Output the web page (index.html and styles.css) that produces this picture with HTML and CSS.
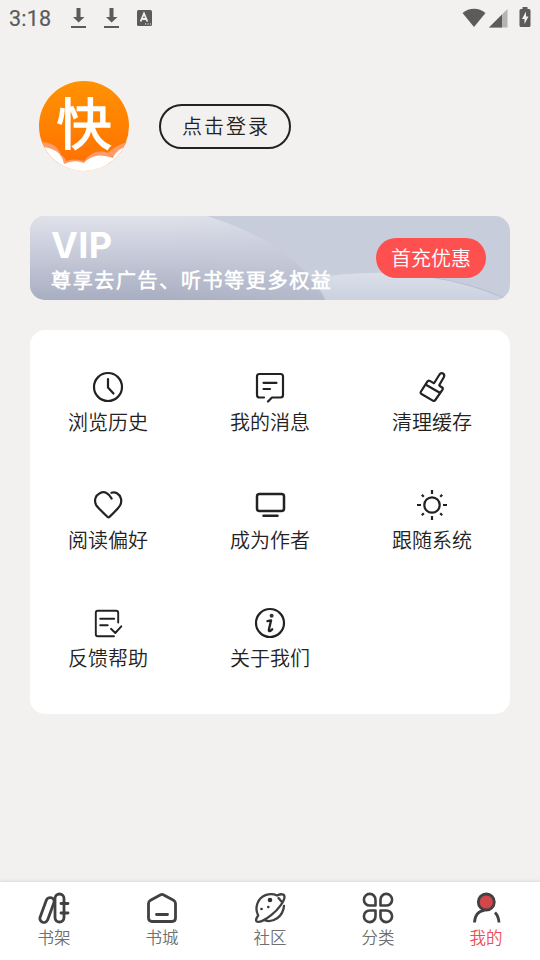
FILE: index.html
```
<!DOCTYPE html>
<html lang="zh-CN">
<head>
<meta charset="utf-8">
<title>我的</title>
<link rel="stylesheet" href="styles.css">
</head>
<body>
<header class="status">
  <span class="time">3:18</span>
  <svg class="dl" width="16" height="22" viewBox="0 0 16 22"><path d="M5.500 1h4v9h4L7.600 15.500 2 10h3.500zM0 19h15v2H0z"/></svg>
  <svg class="dl second" width="16" height="22" viewBox="0 0 16 22"><path d="M5.500 1h4v9h4L7.600 15.500 2 10h3.500zM0 19h15v2H0z"/></svg>
  <svg class="lang" width="15" height="16" viewBox="0 0 15 16"><rect width="15" height="16" rx="1.500"/><path class="letter" d="M3.600 11.500 7 3.500l3.400 8M5 9h4"/><path class="dots" d="M8 14h1.200M10.500 14h1.200M13 14h1"/></svg>
  <span class="spacer"></span>
  <svg class="wifi" width="24" height="20" viewBox="0 0 24 20"><path d="M.5 5C7-.8 17-.8 23.500 5L12 19z"/></svg>
  <svg class="signal" width="19" height="19" viewBox="0 0 19 19"><path d="M0 18.500 18.500 0v18.500z" opacity=".4"/><path d="M0 18.500 13 5.500v13z"/></svg>
  <svg class="battery" width="12" height="20" viewBox="0 0 12 20"><path d="M3.500 0h5v2H10q1.500 0 1.500 1.500v15q0 1.500-1.500 1.500H2Q.5 20 .5 18.500v-15Q.5 2 2 2h1.500z"/><path class="bolt" d="M7 4.500 3 12h2.500v5L9.500 9.500H7z"/></svg>
</header>
<section class="profile">
  <div class="avatar">
    <svg class="clouds" width="90" height="90" viewBox="0 0 90 90">
      <path fill="#ff9b66" d="M0 61Q18 61 22 74q4 2 5 6 8-3 18 0Q55 67 69 72q7-8 21-11v29H0z"/>
      <path fill="#fff" d="M0 66Q22 66 25 83q10-5 20-1 10-12 29-5Q78 67 90 65v25H0z"/>
    </svg>
    <span>快</span>
  </div>
  <button class="login">点击登录</button>
</section>
<section class="vip">
  <svg class="vip-art" width="480" height="84" viewBox="0 0 480 84">
    <defs>
      <linearGradient id="a" x1="0" y1="0" x2="0" y2="1"><stop stop-color="#e0e2eb"/><stop offset="1" stop-color="#a8aec2"/></linearGradient>
      <linearGradient id="b" x1="0" y1="0" x2="0" y2="1"><stop stop-color="#dadfea"/><stop offset="1" stop-color="#cbd1df"/></linearGradient>
      <linearGradient id="c" x1="0" y1="0" x2="1" y2="0"><stop stop-color="#e0e2eb" stop-opacity="0"/><stop offset=".45" stop-color="#c8ccda" stop-opacity="0"/><stop offset="1" stop-color="#c8ccda" stop-opacity=".4"/></linearGradient>
    </defs>
    <path fill="url(#a)" d="M0 0h177Q268 29 295 84H0z"/>
    <path fill="url(#c)" d="M0 0h177Q268 29 295 84H0z"/>
    <path fill="url(#b)" d="M280 63Q330 54 378 58q52 4 97 26H296q-5-12-16-21z"/>
    <path fill="none" stroke="#b5bdd0" d="M400 61q40 6 75 21"/>
  </svg>
  <div class="vip-copy"><h1>VIP</h1><p>尊享去广告、听书等更多权益</p></div>
  <button class="offer">首充优惠</button>
</section>
<main class="menu">
  <a class="item"><svg viewBox="0 0 32 32"><circle cx="16" cy="16" r="14"/><path d="M16 8v8.500l5.500 6"/></svg>浏览历史</a>
  <a class="item"><svg viewBox="0 0 32 32"><path d="M10 26.500H5.500q-2.500 0-2.500-2.500V5.500Q3 3 5.500 3h21Q29 3 29 5.500V24q0 2.500-2.500 2.500H18l-4 4M9.500 11.800h13M9.500 18h6.500"/></svg>我的消息</a>
  <a class="item"><svg viewBox="0 0 32 32"><path d="M11.300 10.600q1-1.500 2.500-.7l3.500 2q.8.400 1.200-.4L23.200 4c1-2 2.500-2.300 3.800-1.500s1.600 2.100.8 3.700l-4.300 7.500q-.5.800.3 1.300l2 1.200q1.600 1 .6 2.600L19.300 29q-1 1.500-2.500.6L5.500 23q-1.500-1-.5-2.500zM9.500 13.500l14.700 8.500"/></svg>清理缓存</a>
  <a class="item"><svg viewBox="0 0 32 32"><path d="M19.600 9.500C17 4.200 12.500 1.700 7.800 4.200 3.200 6.500 2 11.500 4 15.800 6 19 12.500 25 15.500 27.900q1 .8 2 0C20 25.500 26.500 19 28 16.500 30.500 12 29 6.500 25 4.200q-2.700-1.400-5.500-.4"/></svg>阅读偏好</a>
  <a class="item"><svg viewBox="0 0 32 32"><rect x="3" y="5" width="27" height="17" rx="2.500" stroke-width="2.500"/><path stroke-width="2.500" d="M9.500 26.800h14"/></svg>成为作者</a>
  <a class="item"><svg viewBox="0 0 32 32"><circle cx="16" cy="16" r="7.700"/><path stroke-linecap="butt" d="M16 1v4M16 27v4M1 16h4M27 16h4M5.800 5.800l2 2M24.200 24.200l2 2M5.800 26.200l2-2M24.200 7.800l2-2"/></svg>跟随系统</a>
  <a class="item"><svg viewBox="0 0 32 32"><path d="M26.200 15.500V5.700q0-2-2-2H5.800q-2 0-2 2v21.500q0 2 2 2H22M8.200 11.800h14M8.200 18.300h7.500M19 21.800l4.300 4.200 6-6.700" stroke-width="1.900"/></svg>反馈帮助</a>
  <a class="item"><svg viewBox="0 0 32 32"><circle cx="16" cy="16" r="14"/><circle class="solid" cx="17.600" cy="8.800" r="2"/><path d="M13.500 14.200l3.600-.9-2.200 9.200q-.4 2.200 1.300 1.500l2-1.700" stroke-width="2.300"/></svg>关于我们</a>
</main>
<nav class="tabs">
  <a class="tab"><svg viewBox="0 0 32 32"><rect x="5" y="5" width="8" height="26" rx="4" transform="rotate(20 9 18)"/><rect x="17" y="2" width="9" height="28" rx="4.500"/><path d="M23 11.500h7M23 21h7"/></svg>书架</a>
  <a class="tab"><svg viewBox="0 0 32 32"><path d="M2.500 11.500q0-2.200 2-3.300L14.700 2.700q1.300-.7 2.600 0L27.500 8.200q2 1.100 2 3.300V26q0 3.500-3.500 3.500H6Q2.500 29.500 2.500 26zM10.500 22.500h11"/></svg>书城</a>
  <a class="tab"><svg viewBox="0 0 32 32"><path stroke-width="2.300" d="M4.200 23.500C0 15.500 4 6 11.500 3.200q6-2.300 11.500.3M11 28.400c8 2.500 18-3.300 19-14.500M23 3.500c4-1.800 7.500-1.800 7.500 1.200 0 4.500-6 12.500-13 18.200C11 28.300 4.500 31.300 2.500 29.300 1.500 28 2.700 25.500 4.200 23.500M24.500 6l3 3.500"/><circle class="solid" cx="16" cy="8" r="2.300"/><circle class="solid" cx="7.500" cy="17" r="1.300"/><circle class="solid" cx="14.300" cy="15" r="1.300"/></svg>社区</a>
  <a class="tab"><svg viewBox="0 0 32 32"><path stroke-width="2.600" d="M13.500 13.500H8A5.800 5.800 0 1 1 13.500 8zM18.500 13.500H24A5.800 5.800 0 1 0 18.500 8zM13.500 18.500H8A5.800 5.800 0 1 0 13.500 24zM18.500 18.500H24A5.800 5.800 0 1 1 18.500 24z"/></svg>分类</a>
  <a class="tab active"><svg viewBox="0 0 32 32"><circle class="head" cx="16.300" cy="10" r="8"/><path d="M4.500 30.500Q5 19.500 14.500 18.300M25 20.500q3.500 3.500 4 10" stroke-linecap="butt"/></svg>我的</a>
</nav>
</body>
</html>
```
FILE: styles.css
```
* { box-sizing: border-box; }
body {
  margin: 0;
  width: 540px;
  height: 960px;
  display: flex;
  flex-direction: column;
  background: #f2f1ef;
  color: #222;
  font-family: "Noto Sans CJK SC DemiLight", "Noto Sans CJK SC", sans-serif;
  font-weight: 350;
  overflow: hidden;
}
button { border: 0; padding: 0; font: inherit; }
svg { display: block; flex: none; }
.status {
  height: 36px;
  padding: 0 9px;
  display: flex;
  align-items: center;
  fill: #5b5b5b;
}
.time { width: 62px; font: 400 21.500px/36px Roboto, sans-serif; letter-spacing: .2px; color: #5b5b5b; -webkit-text-stroke: .2px #5b5b5b; padding-top: 2px; }
.second { margin-left: 17px; }
.lang { margin-left: 17px; }
.letter, .dots { fill: none; stroke: #f2f1ef; stroke-width: 1.800; }
.dots { stroke-width: 1.200; }
.spacer { flex: 1; }
.signal { margin-left: 3px; }
.battery { margin-left: 11px; margin-top: -2px; }
.bolt { fill: #f2f1ef; }
.profile {
  height: 180px;
  padding-left: 39px;
  display: flex;
  align-items: center;
  gap: 30px;
}
.avatar {
  position: relative;
  width: 90px;
  height: 90px;
  border-radius: 50%;
  overflow: hidden;
  background: linear-gradient(#ff9200, #ff7200 92%, #fff 93%);
  color: #fff;
  text-align: center;
  font-size: 55px;
  font-weight: 700;
  line-height: 78px;
}
.avatar span { position: relative; }
.clouds { position: absolute; inset: 0; }
.login {
  width: 132px;
  height: 45px;
  border: 2px solid #222;
  border-radius: 23px;
  background: none;
  color: #222;
  font-size: 20px;
  letter-spacing: 2px;
  padding-left: 2px;
  line-height: 40px;
}
.vip {
  position: relative;
  height: 84px;
  flex: none;
  margin: 0 30px;
  padding: 0 24px 0 21px;
  display: flex;
  align-items: center;
  justify-content: space-between;
  border-radius: 15px;
  overflow: hidden;
  background: #c8cddb;
  color: #fff;
}
.vip-art { position: absolute; inset: 0; }
.vip-copy, .offer { position: relative; }
.vip h1 { margin: 0; font: 700 36px/34px Inter, sans-serif; letter-spacing: .4px; }
.vip p { margin: 3px 0 0; font-size: 20px; font-weight: 700; line-height: 30px; letter-spacing: 1.650px; }
.vip-copy { padding-top: 7px; }
.offer {
  width: 110px;
  height: 40px;
  border-radius: 20px;
  background: #ff5050;
  color: #fff;
  font-size: 20px;
  line-height: 40px;
}
.menu {
  flex: none;
  height: 384px;
  margin: 30px 30px 0;
  padding: 41px 38px 0;
  display: grid;
  grid-template-columns: repeat(3, 80px);
  column-gap: 82px;
  grid-auto-rows: 118px;
  align-content: start;
  border-radius: 15px;
  background: #fff;
}
.item {
  display: flex;
  flex-direction: column;
  align-items: center;
  font-size: 20px;
  line-height: 30px;
  gap: 4px;
  white-space: nowrap;
}
.item svg, .tab svg {
  width: 32px;
  height: 32px;
  fill: none;
  stroke: #222;
  stroke-width: 2.200;
  stroke-linecap: round;
  stroke-linejoin: round;
}
.item .solid, .tab .solid { fill: #333; stroke: none; }
.tabs {
  height: 78px;
  flex: none;
  margin-top: auto;
  padding-top: 10px;
  display: flex;
  background: #fff;
  box-shadow: 0 -1px 3px rgba(0, 0, 0, .1);
}
.tab {
  flex: 1;
  display: flex;
  flex-direction: column;
  align-items: center;
  color: #707070;
  font-size: 16.500px;
  line-height: 27px;
}
.tab svg { stroke: #414141; stroke-width: 2.800; }
.tab .head { fill: #d5464a; }
.tab.active { color: #ed4c51; }
```
